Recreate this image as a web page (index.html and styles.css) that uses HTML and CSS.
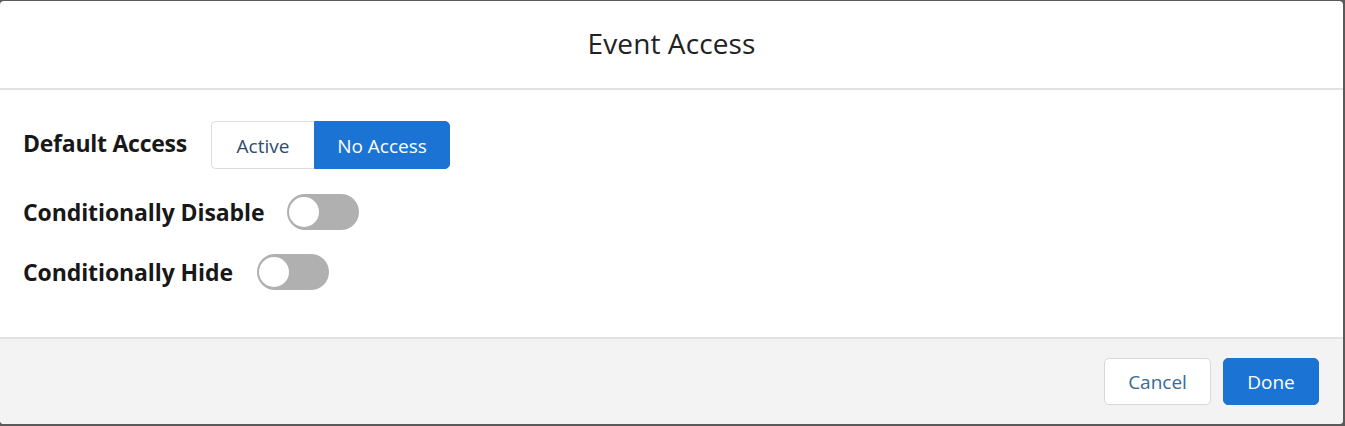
FILE: index.html
```html
<!DOCTYPE html>
<html lang="en">
<head>
<meta charset="utf-8">
<title>Event Access</title>
<link rel="stylesheet" href="styles.css">
</head>
<body>
<div class="modal">
  <header class="modal-header">
    <h1 class="modal-title">Event Access</h1>
  </header>
  <section class="modal-body">
    <div class="row">
      <span class="label">Default Access</span>
      <div class="seg">
        <button class="seg-btn">Active</button>
        <button class="seg-btn selected">No Access</button>
      </div>
    </div>
    <div class="row row-toggle">
      <span class="label">Conditionally Disable</span>
      <span class="toggle"><span class="knob"></span></span>
    </div>
    <div class="row row-toggle">
      <span class="label">Conditionally Hide</span>
      <span class="toggle"><span class="knob"></span></span>
    </div>
  </section>
  <footer class="modal-footer">
    <button class="btn btn-neutral">Cancel</button>
    <button class="btn btn-brand">Done</button>
  </footer>
</div>
</body>
</html>
```
FILE: styles.css
```css
html, body {
  margin: 0;
  padding: 0;
  background: #5a5a5a;
  height: 426px;
  overflow: hidden;
}
body {
  font-family: "Open Sans", "Noto Sans", sans-serif;
  color: #181818;
}
.modal {
  margin-top: 1px;
  width: 1343px;
  height: 423px;
  background: #fff;
  border-radius: 4px;
  overflow: hidden;
  display: flex;
  flex-direction: column;
}
.modal-header {
  box-sizing: border-box;
  height: 89px;
  border-bottom: 2px solid #e2e2e2;
  display: flex;
  align-items: center;
  justify-content: center;
  padding-bottom: 3px;
}
.modal-title {
  margin: 0;
  font-size: 28px;
  font-weight: 400;
  color: #222;
  letter-spacing: 0.1px;
}
.modal-body {
  height: 249px;
  box-sizing: border-box;
  padding: 31px 23px 0;
  display: flex;
  flex-direction: column;
  gap: 24px;
  border-bottom: 2px solid #e2e2e2;
}
.row {
  display: flex;
  align-items: center;
  gap: 24px;
}
.row-toggle:nth-child(2) {
  margin-top: 1px;
}
.label {
  font-size: 23px;
  font-weight: 700;
  color: #181818;
  letter-spacing: -0.1px;
}
.row:first-child .label {
  margin-bottom: 4px;
  letter-spacing: -0.25px;
}
.seg {
  display: flex;
  height: 48px;
}
.seg-btn {
  font-family: inherit;
  font-size: 19px;
  border: 1px solid #dcdcdc;
  background: #fff;
  color: #2e4d6b;
  padding: 0;
  margin: 0;
  cursor: pointer;
}
.seg-btn:first-child {
  width: 103px;
  border-radius: 5px 0 0 5px;
  border-right: none;
  padding-top: 2px;
}
.seg-btn.selected {
  width: 136px;
  background: #1b74d3;
  border-color: #1b74d3;
  color: #fff;
  border-radius: 0 5px 5px 0;
  padding-top: 2px;
}
.toggle {
  position: relative;
  width: 72px;
  height: 36px;
  border-radius: 18px;
  background: #b0b0b0;
  display: inline-block;
  flex: none;
}
.row-toggle:nth-child(2) .toggle {
  margin-left: -1px;
}
.knob {
  position: absolute;
  left: 2px;
  top: 3px;
  width: 30px;
  height: 30px;
  border-radius: 50%;
  background: #fff;
}
.modal-footer {
  flex: 1;
  background: #f3f3f3;
  display: flex;
  justify-content: flex-end;
  align-items: flex-start;
  gap: 12px;
  padding: 19px 24px 0 0;
}
.btn {
  font-family: inherit;
  font-size: 19px;
  height: 47px;
  border-radius: 5px;
  padding: 0;
  margin: 0;
  cursor: pointer;
}
.btn-neutral {
  width: 107px;
  background: #fff;
  border: 1px solid #d8d8d8;
  color: #3a6a92;
}
.btn-brand {
  width: 96px;
  background: #1b74d3;
  border: 1px solid #1b74d3;
  color: #fff;
}
```
